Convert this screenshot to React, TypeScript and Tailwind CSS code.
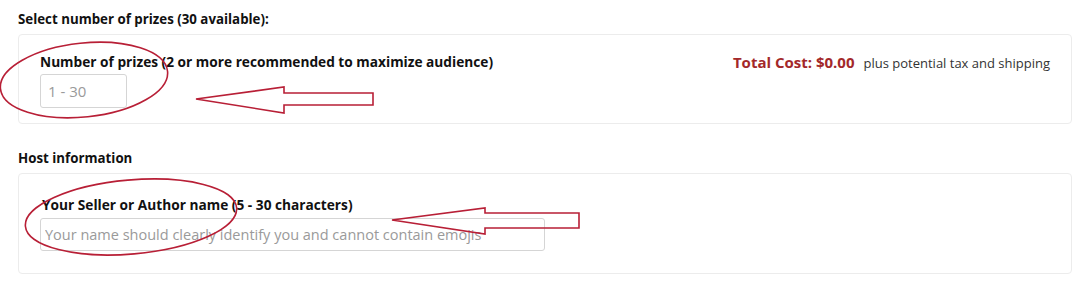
const font = { fontFamily: '"Open Sans", "Liberation Sans", sans-serif' };

const Annotations = () => (
  <svg className="pointer-events-none absolute inset-0" width="1080" height="282" viewBox="0 0 1080 282">
    {/* ellipse around first label/input */}
    <ellipse cx="84" cy="80" rx="84" ry="37" transform="rotate(-6 84 80)" fill="none" stroke="#b81f36" strokeWidth="1.6" />
    {/* arrow 1 */}
    <polygon
      points="196,99 284,87 284,93 373,93 373,105 284,105 284,113"
      fill="none"
      stroke="#b81f36"
      strokeWidth="1.6"
    />
    {/* ellipse around second label/input */}
    <ellipse cx="131" cy="217" rx="106" ry="37" transform="rotate(-5 131 217)" fill="none" stroke="#b81f36" strokeWidth="1.6" />
    {/* arrow 2 */}
    <polygon
      points="392,220 485,208 485,213 579,213 579,228 485,228 485,234"
      fill="none"
      stroke="#b81f36"
      strokeWidth="1.6"
    />
  </svg>
);

export default function App() {
  return (
    <div className="relative h-[282px] w-[1080px] overflow-hidden bg-white text-[#111]" style={font}>
      <div className="flex flex-col px-[18px] pt-[10px]">
        <h2 className="text-[13.3px] font-bold leading-[18px]">Select number of prizes (30 available):</h2>
        <div className="mt-[6px] flex h-[90px] w-[1054px] items-start justify-between rounded-[4px] border border-[#ececec] px-[21px] pt-[18px]">
          <div className="flex flex-col">
            <label className="text-[13.7px] font-bold leading-[18px]">
              Number of prizes (2 or more recommended to maximize audience)
            </label>
            <input
              className="mt-[3px] h-[34px] w-[87px] rounded-[3px] border border-[#d5d5d5] px-[7px] text-[15px] outline-none placeholder:text-[#9a9a9a]"
              placeholder="1 - 30"
            />
          </div>
          <div className="flex items-baseline gap-[9px] leading-[18px]">
            <span className="text-[15px] font-bold text-[#a3282a]">Total Cost: $0.00</span>
            <span className="text-[13px] text-[#333]">plus potential tax and shipping</span>
          </div>
        </div>

        <h2 className="mt-[25px] text-[13.3px] font-bold leading-[18px]">Host information</h2>
        <div className="mt-[6px] flex h-[101px] w-[1054px] flex-col rounded-[4px] border border-[#ececec] px-[21px] pt-[22px]">
          <label className="pl-[2px] text-[13.7px] font-bold leading-[18px]">
            Your Seller or Author name (5 - 30 characters)
          </label>
          <input
            className="mt-[4px] h-[33px] w-[505px] rounded-[3px] border border-[#d5d5d5] px-[4px] text-[14.5px] outline-none placeholder:text-[#9a9a9a]"
            placeholder="Your name should clearly identify you and cannot contain emojis"
          />
        </div>
      </div>
      <Annotations />
    </div>
  );
}
